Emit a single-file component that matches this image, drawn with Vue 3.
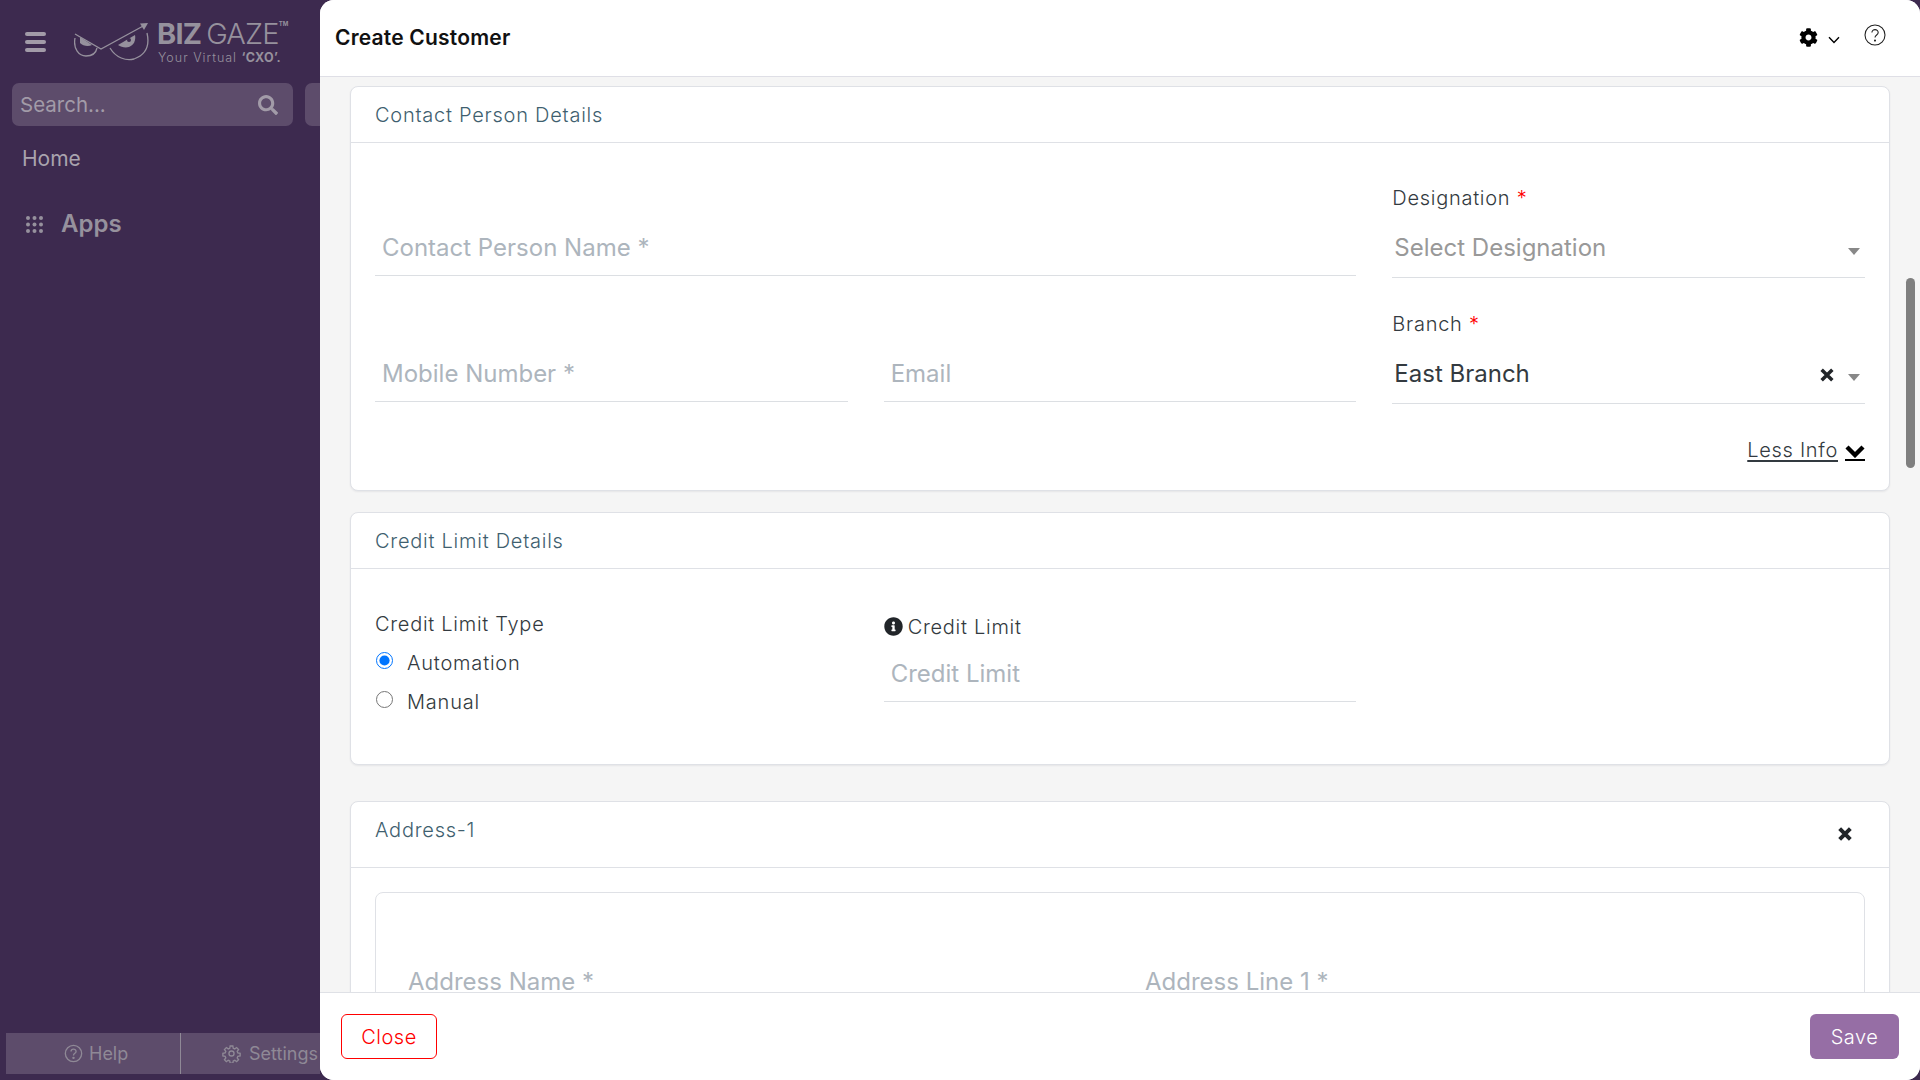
<script setup>
const gear = "M487.4 315.7l-42.6-24.6c4.3-23.2 4.3-47 0-70.2l42.6-24.6c4.9-2.8 7.1-8.6 5.5-14-11.1-35.6-30-67.8-54.7-94.6-3.8-4.1-10-5.1-14.8-2.3L380.8 110c-17.9-15.4-38.5-27.3-60.8-35.1V25.8c0-5.6-3.9-10.5-9.4-11.7-36.7-8.2-74.3-7.8-109.2 0-5.5 1.2-9.4 6.1-9.4 11.7V75c-22.2 7.9-42.8 19.8-60.8 35.1L88.7 85.5c-4.9-2.8-11-1.9-14.8 2.3-24.7 26.7-43.6 58.9-54.7 94.6-1.7 5.4.6 11.2 5.5 14L67.3 221c-4.3 23.2-4.3 47 0 70.2l-42.6 24.6c-4.9 2.8-7.1 8.6-5.5 14 11.1 35.6 30 67.8 54.7 94.6 3.8 4.1 10 5.1 14.8 2.3l42.6-24.6c17.9 15.4 38.5 27.3 60.8 35.1v49.2c0 5.6 3.9 10.5 9.4 11.7 36.7 8.2 74.3 7.8 109.2 0 5.5-1.2 9.4-6.1 9.4-11.7v-49.2c22.2-7.9 42.8-19.8 60.8-35.1l42.6 24.6c4.9 2.8 11 1.9 14.8-2.3 24.7-26.7 43.6-58.9 54.7-94.6 1.5-5.5-.7-11.3-5.6-14.1zM256 336c-44.1 0-80-35.9-80-80s35.9-80 80-80 80 35.9 80 80-35.9 80-80 80z"
const info = "M256 8C119 8 8 119 8 256c0 137 111 248 248 248s248-111 248-248C504 119 393 8 256 8zm0 110c23.196 0 42 18.804 42 42s-18.804 42-42 42-42-18.804-42-42 18.804-42 42-42zm56 254c0 6.627-5.373 12-12 12h-88c-6.627 0-12-5.373-12-12v-24c0-6.627 5.373-12 12-12h12v-64h-12c-6.627 0-12-5.373-12-12v-24c0-6.627 5.373-12 12-12h64c6.627 0 12 5.373 12 12v100h12c6.627 0 12 5.373 12 12v24z"
const search = "M505 442.7L405.3 343c-4.5-4.5-10.6-7-17-7H372c27.6-35.3 44-79.7 44-128C416 93.1 322.9 0 208 0S0 93.1 0 208s93.1 208 208 208c48.3 0 92.7-16.4 128-44v16.3c0 6.4 2.5 12.5 7 17l99.7 99.7c9.4 9.4 24.6 9.4 33.9 0l28.3-28.3c9.4-9.4 9.4-24.6.1-34zM208 336c-70.7 0-128-57.2-128-128 0-70.7 57.2-128 128-128 70.7 0 128 57.2 128 128 0 70.7-57.2 128-128 128z"
const dots = [0, 1, 2].flatMap((r) => [0, 1, 2].map((c) => ({ x: 3 + c * 6.5, y: 3 + r * 6.5 })))
</script>

<template>
  <div class="page">
    <aside class="sidebar">
      <div class="brand">
        <div class="burger"><i></i><i></i><i></i></div>
        <svg class="eyes" viewBox="0 0 76 42" fill="none" stroke="#96919d">
          <path d="M1 12 L27 27 L71 3" stroke-width="1.3" />
          <path d="M66 1.5 L74 1 L70 8 Z" fill="#96919d" stroke="none" />
          <path d="M1 16 C-1 27 5 34 12 34 C18 34 22 31 23 26" stroke-width="1.3" />
          <path d="M36 26 C42 36 52 39 60 37 C71 33 76 24 73 11" stroke-width="1.3" />
          <path d="M6 15 L18 23 C14 25 9 24 6 21 Z" fill="#96919d" stroke="none" />
          <path d="M44 23 L61 13 C62 18 60 23 55 25 C51 26 47 25 44 23 Z" fill="#96919d" stroke="none" />
          <circle cx="55" cy="18" r="2" fill="#3d2a4f" stroke="none" />
        </svg>
        <div class="wordmark">
          <div class="wm-top"><b>BIZ</b><span>GAZE</span><sup>TM</sup></div>
          <div class="wm-sub">Your Virtual <b>‘CXO’.</b></div>
        </div>
      </div>
      <div class="search-row">
        <div class="search">
          <span>Search...</span>
          <svg viewBox="0 0 512 512" class="search-ico"><path :d="search" fill="#a29ba8" /></svg>
        </div>
        <div class="search-next"></div>
      </div>
      <div class="nav-home">Home</div>
      <div class="nav-apps">
        <svg viewBox="0 0 19 19" class="grid-ico"><circle v-for="(d, i) in dots" :key="i" :cx="d.x" :cy="d.y" r="2" fill="#96919d" /></svg>
        <span>Apps</span>
      </div>
      <div class="side-foot">
        <div class="foot-help">
          <svg viewBox="0 0 20 20" class="foot-ico" fill="none" stroke="#8f8996" stroke-width="1.4"><circle cx="10" cy="10" r="8.6" /><path d="M7.4 7.8 C7.4 4.6 12.7 4.6 12.7 7.8 C12.7 9.8 10 9.8 10 12" /><circle cx="10" cy="14.6" r=".6" /></svg>
          <span>Help</span>
        </div>
        <div class="foot-set">
          <svg viewBox="0 0 24 24" class="foot-ico" fill="none" stroke="#8f8996" stroke-width="1.7"><circle cx="12" cy="12" r="3.2" /><path d="M10.3 2.5h3.4l.5 2.9 1.9.8 2.4-1.7 2.4 2.4-1.7 2.4.8 1.9 2.9.5v3.4l-2.9.5-.8 1.9 1.7 2.4-2.4 2.4-2.4-1.7-1.9.8-.5 2.9h-3.4l-.5-2.9-1.9-.8-2.4 1.7-2.4-2.4 1.7-2.4-.8-1.9-2.9-.5v-3.4l2.9-.5.8-1.9-1.7-2.4 2.4-2.4 2.4 1.7 1.9-.8z" /></svg>
          <span>Settings</span>
        </div>
      </div>
    </aside>

    <main class="panel">
      <header class="top">
        <h1>Create Customer</h1>
        <div class="top-icons">
          <svg viewBox="0 0 512 512" class="gear"><path :d="gear" fill="#000" /></svg>
          <svg viewBox="0 0 12 8" class="chev" fill="none" stroke="#000" stroke-width="1.4"><path d="M1 1.2 L6 6.4 L11 1.2" /></svg>
          <svg viewBox="0 0 22 22" class="help" fill="none" stroke="#222" stroke-width="1.1"><circle cx="11" cy="11" r="10" /><path d="M7.9 8.6 C7.9 4.6 14.2 4.6 14.2 8.6 C14.2 11 11 11 11 13.6" /><circle cx="11" cy="16.6" r=".5" /></svg>
        </div>
      </header>

      <div class="scroll">
        <section class="card first">
          <div class="card-head">Contact Person Details</div>
          <div class="form-grid">
            <div class="field span2 short row1">
              <div class="value ph">Contact Person Name *</div>
            </div>
            <div class="field row1">
              <label>Designation <em>*</em></label>
              <div class="value ph-select">
                <span>Select Designation</span>
                <i class="caret"></i>
              </div>
            </div>
            <div class="field short">
              <div class="value ph">Mobile Number *</div>
            </div>
            <div class="field short">
              <div class="value ph">Email</div>
            </div>
            <div class="field row1">
              <label>Branch <em>*</em></label>
              <div class="value">
                <span>East Branch</span>
                <svg viewBox="0 0 12 12" class="clear"><path d="M2 2 L10 10 M10 2 L2 10" stroke="#212529" stroke-width="2.6" /></svg>
                <i class="caret"></i>
              </div>
            </div>
          </div>
          <div class="less">
            <a>Less Info</a>
            <span class="less-ico"><svg viewBox="0 0 20 13" fill="none" stroke="#000" stroke-width="4.4"><path d="M2 2 L10 10 L18 2" /></svg></span>
          </div>
        </section>

        <section class="card second">
          <div class="card-head">Credit Limit Details</div>
          <div class="credit">
            <div class="credit-type">
              <div class="ct-label">Credit Limit Type</div>
              <label class="radio"><input type="radio" name="limit" checked /><span>Automation</span></label>
              <label class="radio"><input type="radio" name="limit" /><span>Manual</span></label>
            </div>
            <div class="credit-limit">
              <div class="cl-label">
                <svg viewBox="0 0 512 512" class="info"><path :d="info" fill="#212529" /></svg>
                <span>Credit Limit</span>
              </div>
              <div class="value ph cl-value">Credit Limit</div>
            </div>
          </div>
        </section>

        <section class="card third">
          <div class="card-head addr-head">
            <span>Address-1</span>
            <svg viewBox="0 0 12 12" class="addr-x"><path d="M2 2 L10 10 M10 2 L2 10" stroke="#212529" stroke-width="3" /></svg>
          </div>
          <div class="addr-body">
            <div class="inner">
              <div class="value ph noline">Address Name *</div>
              <div class="value ph noline">Address Line 1 *</div>
            </div>
          </div>
        </section>

        <div class="thumb"></div>
      </div>

      <footer class="bottom">
        <button class="btn-close">Close</button>
        <button class="btn-save">Save</button>
      </footer>
    </main>
  </div>
</template>

<style>
html, body { margin: 0; background: #f2f2f2; overflow: hidden; }
</style>

<style scoped>
* { box-sizing: border-box; }
.page {
  display: flex;
  width: 1920px;
  height: 1080px;
  overflow: hidden;
  background: #3d2a4f;
  font-family: Inter, "Liberation Sans", sans-serif;
  color: #212529;
}

/* sidebar */
.sidebar {
  width: 320px;
  flex: none;
  display: flex;
  flex-direction: column;
  background: #3d2a4f;
  overflow: hidden;
  color: #a29ba8;
}
.brand { display: flex; align-items: flex-start; height: 83px; padding: 17px 0 0 25px; }
.burger { width: 21px; display: flex; flex-direction: column; gap: 4px; margin-top: 15px; flex: none; }
.burger i { display: block; height: 4px; border-radius: 2px; background: #a29ba8; }
.eyes { width: 76px; height: 42px; margin: 5px 0 0 28px; flex: none; }
.wordmark { margin: 1px 0 0 7px; color: #96919d; white-space: nowrap; }
.wm-top { display: flex; align-items: flex-start; font-size: 29px; line-height: 32px; letter-spacing: -.8px; }
.wm-top b { font-weight: 700; margin-right: 5px; }
.wm-top span { font-weight: 300; }
.wm-top sup { font-size: 6px; line-height: 8px; font-weight: 700; letter-spacing: 0; margin-top: 2px; }
.wm-sub { font-size: 12.5px; line-height: 15px; letter-spacing: 1px; margin-left: 1px; font-weight: 300; }
.wm-sub b { font-weight: 700; letter-spacing: .3px; }

.search-row { display: flex; gap: 12px; padding-left: 12px; flex: none; }
.search {
  width: 281px; height: 43px; flex: none;
  border-radius: 7px;
  background: #5d4c6b;
  display: flex; align-items: center; justify-content: space-between;
  padding: 0 15px 0 8px;
  font-size: 20.5px;
  color: #a29ba8;
}
.search-ico { width: 20px; height: 20px; }
.search-next { width: 60px; height: 43px; flex: none; border-radius: 7px; background: #5d4c6b; }
.nav-home { font-size: 21px; line-height: 28px; margin: 19px 0 0 22px; color: #a9a3ae; }
.nav-apps { display: flex; align-items: center; margin: 35px 0 0 25px; font-size: 24px; line-height: 32px; font-weight: 600; color: #96919d; }
.grid-ico { width: 19px; height: 19px; margin-right: 17px; }
.side-foot {
  margin: auto 0 6px 6px;
  height: 41px;
  width: 340px;
  flex: none;
  display: flex;
  background: #5d4c6b;
  font-size: 18px;
  color: #8f8996;
}
.foot-help { width: 175px; display: flex; align-items: center; padding-left: 58px; gap: 6px; border-right: 1px solid #8f8996; flex: none; }
.foot-set { display: flex; align-items: center; padding-left: 41px; gap: 8px; white-space: nowrap; }
.foot-ico { width: 19px; height: 19px; flex: none; }

/* panel */
.panel {
  flex: 1;
  min-width: 0;
  height: 1080px;
  display: flex;
  flex-direction: column;
  background: #fff;
  border-radius: 14px;
  overflow: hidden;
}
.top {
  height: 77px; flex: none;
  display: flex; align-items: center; justify-content: space-between;
  padding: 0 34px 2px 15px;
  background: #fff;
  border-bottom: 1px solid #dfdfe6;
}
.top h1 { margin: 0; font-size: 21px; font-weight: 600; letter-spacing: .2px; color: #111; }
.top-icons { display: flex; align-items: center; }
.gear { width: 19px; height: 19px; }
.chev { width: 12px; height: 8px; margin: 5px 0 0 10px; }
.help { width: 22px; height: 22px; margin: -4px 0 0 24px; }

.scroll {
  position: relative;
  flex: 1;
  min-height: 0;
  overflow: hidden;
  background: #f5f5f5;
  padding: 9px 0 0 30px;
}
.card {
  width: 1540px;
  background: #fff;
  border: 1px solid #dfe1e6;
  border-radius: 8px;
  box-shadow: 0 1px 2px rgba(30, 30, 60, .07);
}
.first { height: 405px; }
.second { height: 253px; margin-top: 21px; }
.third { height: 400px; margin-top: 36px; }
.card-head {
  height: 56px;
  padding: 0 24px;
  display: flex; align-items: center; justify-content: space-between;
  font-size: 20px;
  font-weight: 350;
  letter-spacing: .75px;
  color: #3f5f6f;
  border-bottom: 1px solid #dfe1e6;
}
.addr-head { height: 66px; padding-bottom: 10px; }
.addr-x { width: 16px; height: 16px; margin: 8px 12px 0 0; }

.form-grid {
  display: grid;
  grid-template-columns: repeat(3, 1fr);
  column-gap: 36px;
  row-gap: 33px;
  padding: 42px 24px 0;
}
.span2 { grid-column: span 2; }
.field { display: flex; flex-direction: column; justify-content: flex-end; height: 92px; }
.field.row1 { height: 93px; }
.field.row1 .value { height: 51px; }
.field label { font-size: 20px; font-weight: 350; line-height: 27px; margin-bottom: 15px; color: #333a40; letter-spacing: .72px; }
.field em { color: #f00; font-style: normal; margin-left: 0; }
.field.short { height: 91px; margin-bottom: 1px; }
.field.short .value { height: 50px; }
.value {
  height: 50px; flex: none;
  display: flex; align-items: flex-start;
  padding: 0 0 0 2px;
  line-height: 42px;
  font-size: 24px;
  color: #333a40;
  border-bottom: 1px solid #dcdfe3;
}
.value > span:first-child { flex: 1; }
.ph { color: #adb5bd; padding-left: 7px; line-height: 44px; }
.ph-select { color: #999; }
.caret {
  width: 0; height: 0; flex: none;
  margin: 21px 5px 0 0;
  border-left: 6px solid transparent;
  border-right: 6px solid transparent;
  border-top: 7px solid #888;
}
.clear { width: 16px; height: 16px; margin: 13.5px 13px 0 0; flex: none; }
.less {
  display: flex; justify-content: flex-end; gap: 7px;
  padding: 33px 24px 0 0;
  font-size: 20px; font-weight: 350; line-height: 27px; color: #333a40; letter-spacing: .7px;
}
.less a { text-decoration: underline; text-underline-offset: 3px; }
.less-ico { display: flex; align-items: flex-start; width: 20px; height: 24px; border-bottom: 2px solid #000; padding-top: 8px; }
.less-ico svg { width: 20px; height: 13px; }

.credit {
  display: grid;
  grid-template-columns: repeat(3, 1fr);
  column-gap: 36px;
  padding: 42px 24px 0;
}
.ct-label { font-size: 20px; font-weight: 350; line-height: 27px; color: #333a40; letter-spacing: .72px; margin-bottom: 5px; }
.radio { display: flex; align-items: center; height: 39px; font-size: 20px; font-weight: 350; color: #333a40; letter-spacing: .8px; }
.radio input { width: 17px; height: 17px; margin: -4px 14px 0 1px; flex: none; }
.radio span { display: block; }
.cl-label { display: flex; align-items: center; gap: 5px; font-size: 20px; font-weight: 350; line-height: 27px; margin-top: 3px; color: #333a40; letter-spacing: .72px; }
.info { width: 19px; height: 19px; margin-top: -2px; }
.cl-value { height: 61px; padding-top: 5px; line-height: 56px; }

.addr-body { padding: 24px 24px 0; }
.inner {
  height: 300px;
  border: 1px solid #dfe1e6;
  border-radius: 8px;
  display: grid;
  grid-template-columns: 701px 701px;
  column-gap: 36px;
  padding: 67px 0 0 25px;
}
.noline { border: 0; }

.thumb {
  position: absolute;
  right: 5px; top: 201px;
  width: 9px; height: 190px;
  border-radius: 5px;
  background: #7f7f7f;
}

.bottom {
  height: 88px; flex: none;
  display: flex; align-items: flex-start; justify-content: space-between;
  padding: 21px 21px 0;
  background: #fff;
  border-top: 1px solid #dfe1e6;
}
.bottom button { height: 45px; font: inherit; font-size: 20px; font-weight: 350; border-radius: 6px; cursor: pointer; letter-spacing: .5px; }
.btn-close { width: 96px; background: #fff; border: 1px solid #f00; color: #f00; }
.btn-save { width: 89px; background: #966ea5; border: 0; color: #fff; }
</style>
